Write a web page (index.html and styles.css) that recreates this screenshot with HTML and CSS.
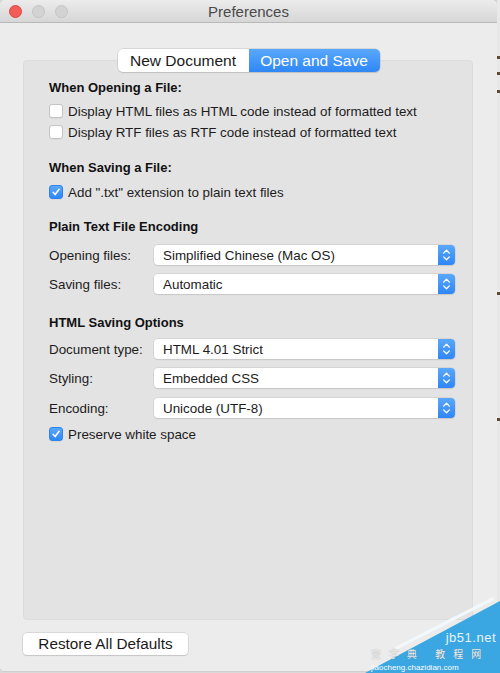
FILE: index.html
```html
<!DOCTYPE html>
<html>
<head>
<meta charset="utf-8">
<title>Preferences</title>
<link rel="stylesheet" href="styles.css">
</head>
<body>
<div class="screen">
  <div class="window">
    <div class="titlebar">
      <div class="lights">
        <span class="light red"></span>
        <span class="light gray"></span>
        <span class="light gray"></span>
      </div>
      <div class="title">Preferences</div>
    </div>
    <div class="tabs">
      <div class="tab">New Document</div>
      <div class="tab active">Open and Save</div>
    </div>
    <div class="panel">
      <div class="heading h-open">When Opening a File:</div>
      <label class="check cb1"><span class="box"></span>Display HTML files as HTML code instead of formatted text</label>
      <label class="check cb2"><span class="box"></span>Display RTF files as RTF code instead of formatted text</label>

      <div class="heading h-save">When Saving a File:</div>
      <label class="check cb3"><span class="box on"><svg viewBox="0 0 14 14"><path d="M3.6 7.4 L6 10 L10.6 3.8" /></svg></span>Add ".txt" extension to plain text files</label>

      <div class="heading h-enc">Plain Text File Encoding</div>
      <div class="row sel1"><span class="label">Opening files:</span><div class="select"><span class="val">Simplified Chinese (Mac OS)</span><span class="stepper"><svg viewBox="0 0 18 20"><path d="M6 8 L9 5 L12 8 M6 12 L9 15 L12 12"/></svg></span></div></div>
      <div class="row sel2"><span class="label">Saving files:</span><div class="select"><span class="val">Automatic</span><span class="stepper"><svg viewBox="0 0 18 20"><path d="M6 8 L9 5 L12 8 M6 12 L9 15 L12 12"/></svg></span></div></div>

      <div class="heading h-html">HTML Saving Options</div>
      <div class="row sel3"><span class="label">Document type:</span><div class="select"><span class="val">HTML 4.01 Strict</span><span class="stepper"><svg viewBox="0 0 18 20"><path d="M6 8 L9 5 L12 8 M6 12 L9 15 L12 12"/></svg></span></div></div>
      <div class="row sel4"><span class="label">Styling:</span><div class="select"><span class="val">Embedded CSS</span><span class="stepper"><svg viewBox="0 0 18 20"><path d="M6 8 L9 5 L12 8 M6 12 L9 15 L12 12"/></svg></span></div></div>
      <div class="row sel5"><span class="label">Encoding:</span><div class="select"><span class="val">Unicode (UTF-8)</span><span class="stepper"><svg viewBox="0 0 18 20"><path d="M6 8 L9 5 L12 8 M6 12 L9 15 L12 12"/></svg></span></div></div>
      <label class="check cb4"><span class="box on"><svg viewBox="0 0 14 14"><path d="M3.6 7.4 L6 10 L10.6 3.8" /></svg></span>Preserve white space</label>
    </div>
    <div class="footer">
      <button class="btn">Restore All Defaults</button>
    </div>
  </div>
  <div class="edge">
    <span class="mark m1"></span>
    <span class="mark m2"></span>
    <span class="mark m3"></span>
    <span class="mark m4"></span>
    <span class="mark m5"></span>
  </div>
  <div class="watermark">
    <span class="wm-tri"></span>
    <span class="wm-line"></span>
    <span class="wm-site">jb51.net</span>
    <span class="wm-cn">查字典 教程网</span>
    <span class="wm-url">jiaocheng.chazidian.com</span>
  </div>
</div>
</body>
</html>
```

FILE: styles.css
```css
html, body {
  margin: 0;
  padding: 0;
}
body {
  width: 500px;
  height: 673px;
  overflow: hidden;
  background: #d9d9d9;
  font-family: "Liberation Sans", Arial, sans-serif;
  font-size: 13.4px;
  color: #1c1c1c;
}
.screen {
  position: relative;
  display: flex;
  width: 500px;
  height: 673px;
}
.window {
  width: 497px;
  height: 671px;
  background: #ececec;
  border-radius: 5px 5px 4px 4px;
  display: flex;
  flex-direction: column;
  box-shadow: 0 0 0 1px #cfcfcf;
}
.titlebar {
  height: 23px;
  flex: none;
  background: linear-gradient(#ececec, #d6d6d6);
  border-bottom: 1px solid #b9b9b9;
  border-radius: 5px 5px 0 0;
  position: relative;
  display: flex;
  align-items: center;
  justify-content: center;
  box-sizing: border-box;
}
.lights {
  position: absolute;
  left: 9px;
  top: 5px;
  display: flex;
  gap: 10px;
}
.light {
  width: 13px;
  height: 13px;
  border-radius: 50%;
  box-sizing: border-box;
}
.light.red {
  background: #f25e57;
  border: 1px solid #e0443e;
}
.light.gray {
  background: #d3d3d3;
  border: 1px solid #c4c4c4;
}
.title {
  font-size: 15px;
  color: #4a4a4a;
  margin-top: 1px;
}
.tabs {
  margin: 26px auto -12px;
  display: flex;
  position: relative;
  z-index: 2;
  height: 23px;
  border-radius: 5px;
  box-shadow: 0 0 0 0.5px #c2c2c2, 0 1px 1px rgba(0,0,0,0.15);
  width: 262px;
  overflow: hidden;
}
.tab {
  flex: 1;
  display: flex;
  align-items: center;
  justify-content: center;
  font-size: 15.5px;
  background: #fff;
  color: #1a1a1a;
}
.tab.active {
  background: linear-gradient(#5aa8fb, #2f87f6);
  color: #fff;
}
.panel {
  margin: 0 24px 0 23px;
  height: 560px;
  flex: none;
  box-sizing: border-box;
  background: #e3e3e3;
  border: 1px solid #dcdcdc;
  border-radius: 4px;
  padding: 18px 17px 0 25px;
  display: flex;
  flex-direction: column;
}
.heading {
  font-weight: bold;
  font-size: 13px;
  height: 18px;
  line-height: 18px;
  color: #111;
}
.check {
  display: flex;
  align-items: center;
  height: 20px;
  gap: 5px;
}
.box {
  width: 14px;
  height: 14px;
  box-sizing: border-box;
  border-radius: 3px;
  background: #fff;
  border: 1px solid #c4c4c4;
  box-shadow: 0 0.5px 0.5px rgba(0,0,0,0.08);
  flex: none;
  display: flex;
}
.box.on {
  background: linear-gradient(#5aa8fb, #2f86f6);
  border-color: #2f82ee;
}
.box svg {
  width: 12px;
  height: 12px;
  fill: none;
  stroke: #fff;
  stroke-width: 1.8;
  stroke-linecap: round;
  stroke-linejoin: round;
}
.row {
  display: flex;
  align-items: center;
  height: 20px;
}
.label {
  width: 105px;
  flex: none;
}
.select {
  flex: 1;
  height: 20px;
  background: #fff;
  border-radius: 4px;
  box-shadow: 0 0 0 0.5px #c8c8c8, 0 1px 1px rgba(0,0,0,0.12);
  display: flex;
  align-items: center;
  justify-content: space-between;
}
.val {
  padding-left: 9px;
}
.stepper {
  width: 17px;
  height: 20px;
  border-radius: 0 4px 4px 0;
  background: linear-gradient(#5aa8fb, #2f86f6);
  display: flex;
}
.stepper svg {
  width: 17px;
  height: 20px;
  fill: none;
  stroke: #fff;
  stroke-width: 1.4;
  stroke-linecap: round;
  stroke-linejoin: round;
}
.cb1 { margin-top: 4px; }
.cb2 { margin-top: 1px; }
.h-save { margin-top: 17px; }
.cb3 { margin-top: 5px; }
.h-enc { margin-top: 16px; }
.sel1 { margin-top: 9px; }
.sel2 { margin-top: 9px; }
.h-html { margin-top: 20px; }
.sel3 { margin-top: 7px; }
.sel4 { margin-top: 9px; }
.sel5 { margin-top: 10px; }
.cb4 { margin-top: 6px; }
.footer {
  padding: 13px 0 0 23px;
}
.btn {
  font-family: inherit;
  font-size: 15.3px;
  color: #1a1a1a;
  width: 165px;
  height: 22px;
  padding: 0;
  background: #fff;
  border: none;
  border-radius: 4px;
  box-shadow: 0 0 0 0.5px #c4c4c4, 0 1px 1px rgba(0,0,0,0.15);
}
.edge {
  flex: 1;
  background: #e8e8e8;
  position: relative;
}
.mark {
  position: absolute;
  left: 0;
  width: 3px;
  height: 3px;
  background: #5a4a3a;
}
.m1 { top: 56px; }
.m2 { top: 72px; }
.m3 { top: 90px; }
.m4 { top: 292px; }
.m5 { top: 418px; }
.watermark {
  position: absolute;
  right: 0;
  bottom: 0;
  width: 135px;
  height: 72px;
  display: flex;
  flex-direction: column;
  justify-content: flex-end;
  padding: 0 4px 0 6px;
  box-sizing: border-box;
}
.wm-tri {
  position: absolute;
  inset: 0;
  background: #3aa7e2;
  clip-path: polygon(100% 0, 100% 100%, 0 100%);
}
.wm-line {
  position: absolute;
  left: 30px;
  top: 46px;
  width: 110px;
  height: 3px;
  background: #f2f8fc;
  transform: rotate(-27deg);
  transform-origin: left top;
}
.wm-site {
  position: relative;
  align-self: flex-end;
  color: #e6f4fc;
  font-size: 13px;
  line-height: 16px;
  letter-spacing: 0.5px;
}
.wm-cn {
  position: relative;
  color: rgba(255,255,255,0.85);
  text-shadow: 0 0 1px #888;
  font-family: "Noto Sans CJK SC", sans-serif;
  font-size: 10px;
  line-height: 16px;
  letter-spacing: 8px;
  white-space: nowrap;
}
.wm-url {
  position: relative;
  color: #fff;
  font-size: 8px;
  line-height: 11px;
  white-space: nowrap;
}
```
